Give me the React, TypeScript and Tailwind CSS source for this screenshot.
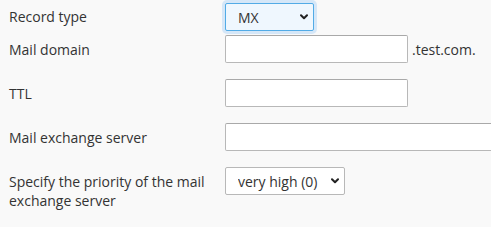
import React from 'react';

const Chevron = () => (
  <svg
    className="pointer-events-none absolute right-[6px] top-1/2 -translate-y-1/2"
    width="8"
    height="6"
    viewBox="0 0 8 6"
    fill="none"
  >
    <path d="M1 1.2 L4 4.2 L7 1.2" stroke="#222" strokeWidth="2" strokeLinecap="round" strokeLinejoin="round" />
  </svg>
);

const App = () => {
  return (
    <div className="min-h-[227px] w-full overflow-hidden bg-[#f9f9f9] pl-[9px] pt-[3px] text-[14px] leading-[19px] text-[#333] font-['Open_Sans',sans-serif]">
      <div className="flex items-start">
        <label className="w-[216px] shrink-0 pt-[4px]">Record type</label>
        <div className="relative rounded-[5px] bg-[#d5e7f8] p-[3px] -m-[3px]">
          <div className="relative">
            <select
              defaultValue="MX"
              className="h-[28px] w-[89px] appearance-none rounded-[2px] border border-[#52abe6] bg-[#eff7fe] pl-[12px] text-[14px] text-[#333] outline-none"
            >
              <option>A</option>
              <option>AAAA</option>
              <option>CNAME</option>
              <option>MX</option>
              <option>TXT</option>
            </select>
            <Chevron />
          </div>
        </div>
      </div>

      <div className="mt-[4px] flex items-start">
        <label className="w-[216px] shrink-0 pt-[5px]">Mail domain</label>
        <input
          type="text"
          className="h-[28px] w-[183px] rounded-[2px] border border-[#b8b8b8] border-t-[#a9a9a9] bg-white outline-none"
        />
        <span className="ml-[4px] pt-[5px]">.test.com.</span>
      </div>

      <div className="mt-[16px] flex items-start">
        <label className="w-[216px] shrink-0 pt-[5px]">TTL</label>
        <input
          type="text"
          className="h-[28px] w-[183px] rounded-[2px] border border-[#b8b8b8] border-t-[#a9a9a9] bg-white outline-none"
        />
      </div>

      <div className="mt-[16px] flex items-start">
        <label className="w-[216px] shrink-0 pt-[5px]">Mail exchange server</label>
        <input
          type="text"
          className="h-[28px] w-[300px] shrink-0 rounded-[2px] border border-[#b8b8b8] border-t-[#a9a9a9] bg-white outline-none"
        />
      </div>

      <div className="mt-[16px] flex items-start">
        <label className="w-[216px] shrink-0 pr-[10px] pt-[5px]">
          Specify the priority of the mail exchange server
        </label>
        <div className="relative">
          <select
            defaultValue="0"
            className="h-[28px] w-[120px] appearance-none rounded-[2px] border border-[#b8b8b8] bg-white pl-[12px] text-[14px] text-[#333] outline-none"
          >
            <option value="0">very high (0)</option>
            <option value="10">high (10)</option>
            <option value="20">normal (20)</option>
            <option value="30">low (30)</option>
          </select>
          <Chevron />
        </div>
      </div>
    </div>
  );
};

export default App;
